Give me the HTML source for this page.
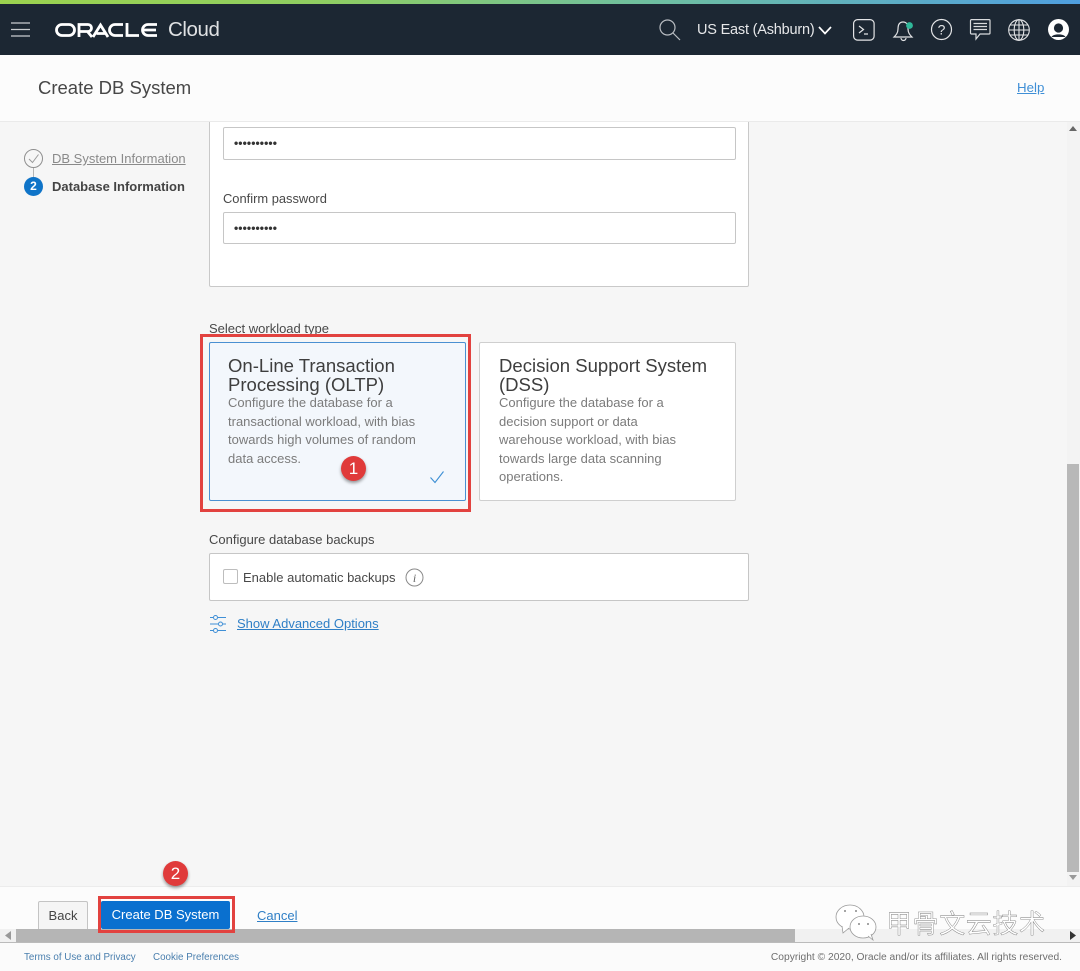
<!DOCTYPE html>
<html><head><meta charset="utf-8"><style>
html,body{margin:0;padding:0}
body{width:1080px;height:971px;position:relative;overflow:hidden;background:#f6f6f6;font-family:"Liberation Sans","Noto Sans CJK SC",sans-serif;color:#3f3f3f}
.a{position:absolute;white-space:nowrap}
.box{position:absolute;box-sizing:border-box;background:#fff;border:1px solid #c6c6c6;border-radius:2px}
a{color:#2f7fc6;text-decoration:underline}
svg{position:absolute;overflow:visible}
.card{position:absolute;box-sizing:border-box;top:342px;height:159px;border-radius:2px;border:1px solid #cfcfcf;background:#fff}
.h{position:absolute;left:18px;top:14px;font-size:18.55px;line-height:18.5px;color:#3e3e3e;white-space:nowrap}
.d{position:absolute;left:18px;top:51px;font-size:13px;line-height:18.6px;color:#7b7b7b;white-space:nowrap}
.dots{position:absolute;left:10px;top:0;font-size:12px;letter-spacing:.1px;color:#333;font-weight:bold}
.num{position:absolute;width:25px;height:25px;border-radius:50%;background:#e03a3a;color:#fff;font-size:17px;line-height:25px;text-align:center;box-shadow:0 2px 3px rgba(0,0,0,.4)}
</style></head><body>

<div class="box" style="left:209px;top:110px;width:540px;height:177px;border-color:#c9c9c9"></div>
<div class="box" style="left:223px;top:127px;width:513px;height:33px"><div class="dots" style="top:8px">••••••••••</div></div>
<div class="a" style="left:223px;top:191px;font-size:12.900px;color:#484848">Confirm password</div>
<div class="box" style="left:223px;top:212px;width:513px;height:32px"><div class="dots" style="top:8px">••••••••••</div></div>

<div class="a" style="left:0;top:0;width:1080px;height:4px;background:linear-gradient(90deg,#9bd24f 0%,#8fce62 30%,#6fbfa0 60%,#4f9fe0 100%)"></div>
<div class="a" style="left:0;top:4px;width:1080px;height:51px;background:#1c2733"></div>

<svg style="left:11px;top:22px" width="20" height="16" stroke="#c9ccd0" stroke-width="1.3"><path d="M0 1H19M0 7.500H19M0 14H19"/></svg>
<svg style="left:55px;top:23px" width="108" height="15" fill="none" stroke="#fff" stroke-width="2.800"><rect x="1.500" y="1.500" width="18" height="11" rx="5.500"/><path d="M24 14V1.500H33a3.300 3.300 0 0 1 0 7H25M32 8l5 6"/><path d="M38 14L45.500 2 53 14M41.500 10.500H50"/><path d="M68 1.500H60a5.500 5.500 0 0 0 0 11H68"/><path d="M72 0V12.500H84"/><path d="M102 1.500H93a5.500 5.500 0 0 0 0 11H102M88 7H101"/></svg>
<div class="a" style="left:168px;top:18px;font-size:20.500px;color:#dfe1e3;letter-spacing:-.4px">Cloud</div>

<svg style="left:659px;top:19px" width="22" height="22" fill="none" stroke="#b9bdc2" stroke-width="1.200"><circle cx="8.500" cy="8.500" r="7.500"/><path d="M14 14L21 21"/></svg>
<div class="a" style="left:697px;top:22px;font-size:14.500px;color:#e6e7e9;letter-spacing:-.2px">US East (Ashburn)</div>
<svg style="left:818px;top:26px" width="14" height="10" fill="none" stroke="#fff" stroke-width="1.700"><path d="M1 1L7 7.500 13 1"/></svg>
<svg style="left:853px;top:19px" width="22" height="22" fill="none" stroke="#e3e4e6" stroke-width="1.200"><rect x=".6" y=".6" width="20.500" height="20.500" rx="4"/><path d="M6 7L10.500 10.500 6 14M11 15H15"/></svg>
<svg style="left:893px;top:19px" width="22" height="23" fill="none" stroke="#e3e4e6" stroke-width="1.200"><path d="M10 3C6 3 5 6 5 10 5 14 3 16 1 18H19C17 16 15 14 15 10 15 6 14 3 10 3ZM8 19a2.500 2.500 0 0 0 5 0"/><circle cx="16.500" cy="6.500" r="3.400" fill="#2fb89a" stroke="none"/></svg>
<svg style="left:931px;top:19px" width="22" height="22" fill="none" stroke="#e3e4e6" stroke-width="1.200"><circle cx="10.500" cy="10.500" r="10"/><text x="10.500" y="15.500" font-family="Liberation Sans" font-size="14" fill="#e3e4e6" stroke="none" text-anchor="middle">?</text></svg>
<svg style="left:970px;top:19px" width="22" height="22" fill="none" stroke="#d9dbdd" stroke-width="1.200"><path d="M1.500.6H19a1 1 0 0 1 1 1V14a1 1 0 0 1-1 1H10L6 20V15H1.500a1 1 0 0 1-1-1V1.600a1 1 0 0 1 1-1Z"/><path d="M3.500 4.500H17M3.500 7.500H17M3.500 10.500H17"/></svg>
<svg style="left:1008px;top:19px" width="22" height="22" fill="none" stroke="#e3e4e6" stroke-width="1.100"><circle cx="11" cy="11" r="10.300"/><ellipse cx="11" cy="11" rx="4.800" ry="10.300"/><path d="M11 .7V21.300M.7 11H21.300M2.200 6H19.800M2.200 16H19.800"/></svg>
<svg style="left:1048px;top:19px" width="21" height="21"><circle cx="10.500" cy="10.500" r="10.500" fill="#fff"/><circle cx="10.500" cy="9" r="4.600" fill="#1c2733"/><path d="M3.500 18C5 14.500 16 14.500 17.500 18" fill="#1c2733"/></svg>

<div class="a" style="left:0;top:55px;width:1080px;height:67px;background:#fcfcfc;border-bottom:1px solid #eaeaea;box-sizing:border-box"></div>
<div class="a" style="left:38px;top:77px;font-size:18.500px;color:#474747">Create DB System</div>
<a class="a" style="left:1017px;top:80px;font-size:13.300px;color:#3f8fd6">Help</a>

<svg style="left:24px;top:149px" width="20" height="40" fill="none"><path d="M9.500 19V30" stroke="#b5b5b5"/><circle cx="9.500" cy="9.500" r="9" stroke="#8f8f8f"/><path d="M5 10L8.500 13.500 14.500 5.500" stroke="#9a9a9a"/></svg>
<a class="a" style="left:52px;top:151px;font-size:13px;color:#8a8a8a">DB System Information</a>
<div class="a" style="left:24px;top:177px;width:19px;height:19px;border-radius:50%;background:#0f74c8;color:#fff;font-size:12px;font-weight:bold;line-height:19px;text-align:center">2</div>
<div class="a" style="left:52px;top:179px;font-size:13px;font-weight:bold;color:#444">Database Information</div>

<div class="a" style="left:209px;top:321px;font-size:13px;color:#484848">Select workload type</div>

<div class="a" style="left:200px;top:334px;width:271px;height:178px;box-sizing:border-box;border:3px solid #e2423f"></div>
<div class="card" style="left:209px;width:257px;background:#f3f7fc;border-color:#4a90d2">
<div class="h">On-Line Transaction<br>Processing (OLTP)</div>
<div class="d">Configure the database for a<br>transactional workload, with bias<br>towards high volumes of random<br>data access.</div>
</div>
<svg style="left:430px;top:471px" width="14" height="13" fill="none" stroke="#3d8fd4" stroke-width="1.100"><path d="M.5 6.500L5 11.500 13.500.5"/></svg>
<div class="num" style="left:341px;top:456px">1</div>

<div class="card" style="left:479px;width:257px">
<div class="h" style="left:19px">Decision Support System<br>(DSS)</div>
<div class="d" style="left:19px">Configure the database for a<br>decision support or data<br>warehouse workload, with bias<br>towards large data scanning<br>operations.</div>
</div>

<div class="a" style="left:209px;top:532px;font-size:13px;color:#484848">Configure database backups</div>
<div class="box" style="left:209px;top:553px;width:540px;height:48px"></div>
<div class="box" style="left:223px;top:569px;width:15px;height:15px;border-color:#bdbdbd;border-radius:2px"></div>
<div class="a" style="left:243px;top:570px;font-size:13px;color:#484848">Enable automatic backups</div>
<svg style="left:405px;top:568px" width="19" height="19" fill="none" stroke="#8a8a8a"><circle cx="9.500" cy="9.500" r="8.500"/><text x="9.500" y="14" font-family="Liberation Serif" font-style="italic" font-size="12" fill="#666" stroke="none" text-anchor="middle">i</text></svg>

<svg style="left:210px;top:615px" width="17" height="18" fill="none" stroke="#3f8fd6"><path d="M0 2.500H3M8 2.500H16M0 9H8M13 9H16M0 15.500H3M8 15.500H16"/><circle cx="5.500" cy="2.500" r="2"/><circle cx="10.500" cy="9" r="2"/><circle cx="5.500" cy="15.500" r="2"/></svg>
<a class="a" style="left:237px;top:616px;font-size:13px;color:#2f7fc6">Show Advanced Options</a>

<div class="a" style="left:1067px;top:122px;width:13px;height:764px;background:#f3f3f3"></div>
<div class="a" style="left:1067px;top:464px;width:12px;height:408px;background:#b8b8b8"></div>
<svg style="left:1069px;top:126px" width="8" height="5"><path d="M0 5L4 0 8 5Z" fill="#666"/></svg>
<svg style="left:1069px;top:875px" width="8" height="5"><path d="M0 0L4 5 8 0Z" fill="#999"/></svg>

<div class="a" style="left:0;top:886px;width:1080px;height:57px;background:#fcfcfc;border-top:1px solid #ececec;box-sizing:border-box"></div>
<div class="a" style="left:0;top:929px;width:1080px;height:14px;background:#f1f1f1;border-bottom:1px solid #bbb;box-sizing:border-box"></div>
<div class="a" style="left:16px;top:929px;width:779px;height:13px;background:#b5b5b5"></div>
<svg style="left:5px;top:931px" width="6" height="9"><path d="M6 0L0 4.500 6 9Z" fill="#999"/></svg>
<svg style="left:1070px;top:931px" width="6" height="9"><path d="M0 0L6 4.500 0 9Z" fill="#333"/></svg>

<div class="a" style="left:38px;top:901px;width:50px;height:28px;box-sizing:border-box;background:#f5f5f5;border:1px solid #c4c4c4;border-bottom:0;border-radius:2px 2px 0 0;text-align:center;font-size:13px;line-height:27px;color:#444">Back</div>
<div class="a" style="left:98px;top:896px;width:137px;height:37px;box-sizing:border-box;border:3px solid #e2423f"></div>
<div class="a" style="left:101px;top:901px;width:129px;height:28px;background:#0a70cf;border-radius:2px;color:#fff;font-size:13px;line-height:28px;text-align:center">Create DB System</div>
<a class="a" style="left:257px;top:908px;font-size:13px;color:#2f7fc6">Cancel</a>
<div class="num" style="left:163px;top:861px">2</div>

<svg style="left:835px;top:903px" width="44" height="38" fill="#fff" stroke="#9a9a9a" stroke-width=".8"><ellipse cx="15" cy="14" rx="14" ry="12"/><path d="M7 23L8 30 14 25"/><ellipse cx="28" cy="24" rx="13" ry="11"/><path d="M33 33L38 37 36 31"/><g fill="#888" stroke="none"><circle cx="10" cy="8" r="1"/><circle cx="21" cy="8" r="1"/><circle cx="24" cy="21" r="1"/><circle cx="33" cy="21" r="1"/></g></svg>
<div class="a" style="left:886px;top:908px;font-size:26px;letter-spacing:.6px;color:#fff;-webkit-text-stroke:.4px #777;line-height:32px">甲骨文云技术</div>

<div class="a" style="left:0;top:943px;width:1080px;height:28px;background:#fbfbfb"></div>
<div class="a" style="left:24px;top:952px;font-size:9.800px;color:#4a7fae">Terms of Use and Privacy</div>
<div class="a" style="left:153px;top:952px;font-size:9.800px;color:#4a7fae">Cookie Preferences</div>
<div class="a" style="right:18px;top:952px;font-size:10.250px;color:#6e6e6e">Copyright © 2020, Oracle and/or its affiliates. All rights reserved.</div>
</body></html>
